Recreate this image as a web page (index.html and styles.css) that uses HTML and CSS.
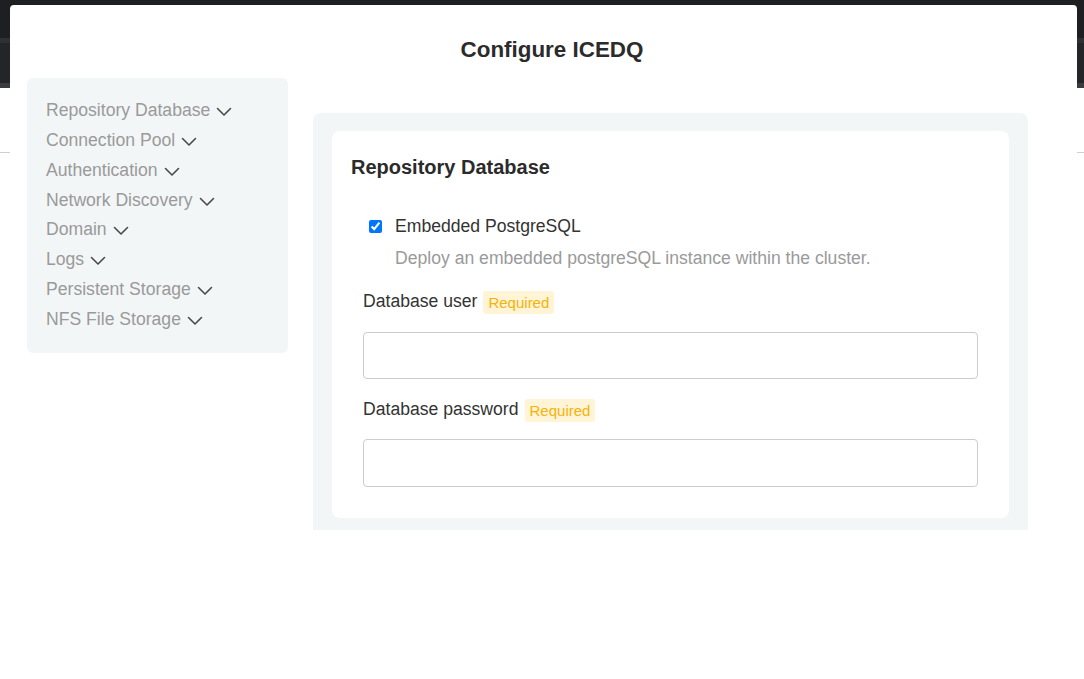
FILE: index.html
```html
<!DOCTYPE html>
<html>
<head>
<meta charset="utf-8">
<title>Configure ICEDQ</title>
<link rel="stylesheet" href="styles.css">
</head>
<body>
<div class="page">
  <header class="app-header">
    <div class="app-header-top"></div>
    <div class="app-header-bottom"></div>
  </header>
  <div class="page-rule"></div>
</div>

<div class="modal">
  <h1 class="modal-title">Configure ICEDQ</h1>
  <div class="modal-body">
    <nav class="side-nav">
      <div class="nav-item">Repository Database <svg class="chev" viewBox="0 0 16 10" width="16" height="10"><polyline points="1.5,1.5 8,8 14.5,1.5"/></svg></div>
      <div class="nav-item">Connection Pool <svg class="chev" viewBox="0 0 16 10" width="16" height="10"><polyline points="1.5,1.5 8,8 14.5,1.5"/></svg></div>
      <div class="nav-item">Authentication <svg class="chev" viewBox="0 0 16 10" width="16" height="10"><polyline points="1.5,1.5 8,8 14.5,1.5"/></svg></div>
      <div class="nav-item">Network Discovery <svg class="chev" viewBox="0 0 16 10" width="16" height="10"><polyline points="1.5,1.5 8,8 14.5,1.5"/></svg></div>
      <div class="nav-item">Domain <svg class="chev" viewBox="0 0 16 10" width="16" height="10"><polyline points="1.5,1.5 8,8 14.5,1.5"/></svg></div>
      <div class="nav-item">Logs <svg class="chev" viewBox="0 0 16 10" width="16" height="10"><polyline points="1.5,1.5 8,8 14.5,1.5"/></svg></div>
      <div class="nav-item">Persistent Storage <svg class="chev" viewBox="0 0 16 10" width="16" height="10"><polyline points="1.5,1.5 8,8 14.5,1.5"/></svg></div>
      <div class="nav-item">NFS File Storage <svg class="chev" viewBox="0 0 16 10" width="16" height="10"><polyline points="1.5,1.5 8,8 14.5,1.5"/></svg></div>
    </nav>

    <main class="panel">
      <section class="card">
        <h2 class="card-title">Repository Database</h2>
        <div class="form-body">
          <label class="check-row">
            <input type="checkbox" class="check" checked>
            <span>Embedded PostgreSQL</span>
          </label>
          <div class="check-desc">Deploy an embedded postgreSQL instance within the cluster.</div>

          <div class="field-label first">
            <span>Database user</span>
            <span class="badge">Required</span>
          </div>
          <input type="text" class="text-input first">

          <div class="field-label">
            <span>Database password</span>
            <span class="badge">Required</span>
          </div>
          <input type="password" class="text-input tall">
        </div>
      </section>
    </main>
  </div>
</div>
</body>
</html>
```

FILE: styles.css
```css
* { box-sizing: border-box; }

html, body {
  margin: 0;
  padding: 0;
  background: #ffffff;
  height: 679px;
  overflow: hidden;
  font-family: "Liberation Sans", Arial, sans-serif;
}

.page {
  width: 1084px;
  height: 679px;
}

.app-header {
  height: 88px;
  background: #1f2023;
  display: flex;
  flex-direction: column;
}

.app-header-top {
  height: 43px;
  background: #1e1f22;
  border-bottom: 5px solid #2f3033;
}

.app-header-bottom {
  flex: 1;
  background: #242528;
  border-bottom: 5px solid #3a3b3e;
}

.page-rule {
  margin-top: 64px;
  height: 1px;
  background: #cfcfcf;
}

.modal {
  position: absolute;
  left: 10px;
  top: 5px;
  right: 7px;
  bottom: 0;
  background: #ffffff;
  border-radius: 4px 4px 0 0;
  padding-left: 17px;
}

.modal-title {
  margin: 0;
  padding-top: 32px;
  text-align: center;
  font-size: 22.4px;
  line-height: 26px;
  font-weight: 700;
  color: #2b2b2b;
}

.modal-body {
  display: flex;
  align-items: flex-start;
  gap: 25px;
  margin-top: 15px;
}

.side-nav {
  width: 261px;
  flex: none;
  background: #f3f6f7;
  border-radius: 6px;
  padding: 18px 19px 18px;
}

.nav-item {
  display: flex;
  align-items: center;
  gap: 6px;
  font-size: 17.6px;
  line-height: 29.86px;
  color: #9a9a9a;
  white-space: nowrap;
}

.chev {
  flex: none;
  margin-top: 2px;
  fill: none;
  stroke: #4a4a4a;
  stroke-width: 1.6;
  stroke-linecap: round;
  stroke-linejoin: round;
}

.panel {
  width: 715px;
  flex: none;
  margin-top: 35px;
  background: #f3f6f7;
  border-radius: 8px 8px 0 0;
  padding: 18px 19px 12px;
}

.card {
  background: #ffffff;
  border-radius: 8px;
  padding: 24px 19px 31px;
}

.card-title {
  margin: 0;
  font-size: 20px;
  line-height: 24px;
  font-weight: 700;
  color: #2b2b2b;
}

.form-body {
  padding: 0 12px;
}

.check-row {
  display: flex;
  align-items: center;
  margin-top: 35px;
  padding-left: 6px;
  font-size: 17.6px;
  line-height: 24px;
  color: #333333;
}

.check {
  width: 13px;
  height: 13px;
  margin: 0 13px 0 0;
  flex: none;
}

.check-desc {
  margin-top: 8px;
  padding-left: 32px;
  font-size: 17.6px;
  line-height: 24px;
  color: #9a9a9a;
}

.field-label {
  display: flex;
  align-items: center;
  gap: 6px;
  height: 24px;
  margin-top: 18px;
  font-size: 17.6px;
  color: #333333;
}

.field-label.first {
  margin-top: 19px;
}

.badge {
  display: inline-block;
  height: 23px;
  line-height: 23px;
  padding: 0 5px;
  margin-top: 2px;
  background: #fff4d6;
  color: #f5b20a;
  font-size: 15px;
  border-radius: 3px;
}

.text-input {
  display: block;
  width: 100%;
  height: 47px;
  margin-top: 18px;
  border: 1px solid #cccccc;
  border-radius: 4px;
  background: #ffffff;
  font-family: inherit;
  font-size: 16px;
  padding: 0 10px;
  outline: none;
}

.text-input.first {
  margin-top: 19px;
}

.text-input.tall {
  height: 48px;
}
```
